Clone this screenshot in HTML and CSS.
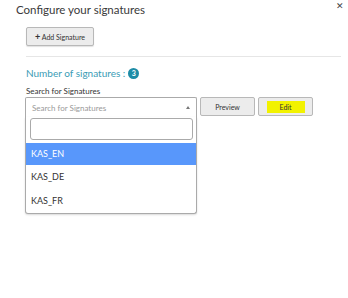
FILE: index.html
```html
<!DOCTYPE html>
<html>
<head>
    <meta charset="utf-8" />
    <title>Configure your signatures</title>
    <link rel="stylesheet" href="styles.css">
</head>
<body>
    <div class="modal">
        <div class="modalHeader">
            <span class="modalTitle">Configure your signatures</span>
            <span class="closeBtn">&#x2715;</span>
        </div>
        <div class="modalBody">
            <button class="btn addBtn"><span class="plus">+</span> Add Signature</button>
            <hr class="divider">
            <div class="countLine">
                Number of signatures :
                <span class="badge">3</span>
            </div>
            <div class="fieldLabel">Search for Signatures</div>
            <div class="selectRow">
                <div class="selectWrap">
                    <div class="selectBox">
                        <span class="placeholder">Search for Signatures</span>
                        <span class="arrow"></span>
                    </div>
                    <div class="dropdown">
                        <div class="searchWrap">
                            <input class="searchInput" type="text">
                        </div>
                        <ul class="options">
                            <li class="option active">KAS_EN</li>
                            <li class="option">KAS_DE</li>
                            <li class="option">KAS_FR</li>
                        </ul>
                    </div>
                </div>
                <button class="btn smallBtn">Preview</button>
                <button class="btn smallBtn editBtn"><span class="marker">Edit</span></button>
            </div>
        </div>
    </div>
</body>
</html>
```

FILE: styles.css
```css
html, body {
    margin: 0;
    padding: 0;
    background: #fff;
    font-family: Lato, "Open Sans", sans-serif;
    color: #333;
}

.modal {
    width: 348px;
    height: 298px;
}

.modalHeader {
    display: flex;
    justify-content: space-between;
    padding: 2px 4px 0 16px;
    height: 22px;
}

.modalTitle {
    font-size: 11.5px;
    line-height: 16px;
    color: #3a3a3a;
}

.closeBtn {
    font-size: 9px;
    line-height: 8px;
    color: #444;
}

.modalBody {
    padding: 3px 7px 0 25px;
}

.btn {
    display: block;
    font-family: inherit;
    background: #ececec;
    border: 1px solid #b8b8b8;
    border-radius: 2px;
    color: #333;
    padding: 0;
    cursor: pointer;
}

.addBtn {
    width: 68px;
    height: 19px;
    margin-left: 1px;
    font-size: 7px;
    box-shadow: 0 1px 1px rgba(0, 0, 0, 0.12);
}

.plus {
    font-size: 9px;
    font-weight: bold;
    line-height: 6px;
}

.divider {
    border: 0;
    border-top: 1px solid #e6e6e6;
    margin: 10px 0 0 1px;
}

.countLine {
    display: flex;
    align-items: center;
    gap: 3px;
    margin-top: 10px;
    margin-left: 1px;
    font-size: 10px;
    color: #3a9cb5;
    height: 12px;
}

.badge {
    display: inline-block;
    width: 11px;
    height: 11px;
    border-radius: 50%;
    background: #1e8ca6;
    color: #fff;
    font-size: 7px;
    font-weight: bold;
    line-height: 11px;
    text-align: center;
}

.fieldLabel {
    margin-top: 7px;
    margin-left: 1px;
    font-size: 8px;
    line-height: 10px;
    color: #333;
}

.selectRow {
    display: flex;
    align-items: flex-start;
    margin-top: 1px;
}

.selectWrap {
    position: relative;
    width: 172px;
    margin-right: 3px;
}

.selectBox {
    display: flex;
    justify-content: space-between;
    align-items: center;
    height: 19px;
    border: 1px solid #aaa;
    border-bottom-color: #ddd;
    border-radius: 2px 2px 0 0;
    padding: 0 6px;
    background: #fff;
}

.placeholder {
    font-size: 8px;
    color: #999;
}

.arrow {
    width: 0;
    height: 0;
    border-left: 2.5px solid transparent;
    border-right: 2.5px solid transparent;
    border-bottom: 3px solid #777;
}

.dropdown {
    position: absolute;
    top: 20px;
    left: 0;
    width: 170px;
    border: 1px solid #aaa;
    border-top: 0;
    border-radius: 0 0 3px 3px;
    background: #fff;
    box-shadow: 0 1px 2px rgba(0, 0, 0, 0.15);
}

.searchWrap {
    padding: 1px 3px 3px 4px;
}

.searchInput {
    display: block;
    box-sizing: border-box;
    width: 100%;
    height: 22px;
    border: 1px solid #aaa;
    border-radius: 3px;
    margin: 0;
}

.options {
    list-style: none;
    margin: 0;
    padding: 0;
}

.option {
    height: 24px;
    line-height: 24px;
    padding-left: 5px;
    font-size: 9px;
    color: #333;
}

.option.active {
    height: 22px;
    line-height: 22px;
    background: #5897fb;
    color: #fff;
}

.smallBtn {
    width: 55px;
    height: 19px;
    font-size: 7px;
}

.editBtn {
    margin-left: 3px;
}

.marker {
    display: inline-block;
    background: #f2f200;
    width: 38px;
    height: 12px;
    line-height: 12px;
}
```
